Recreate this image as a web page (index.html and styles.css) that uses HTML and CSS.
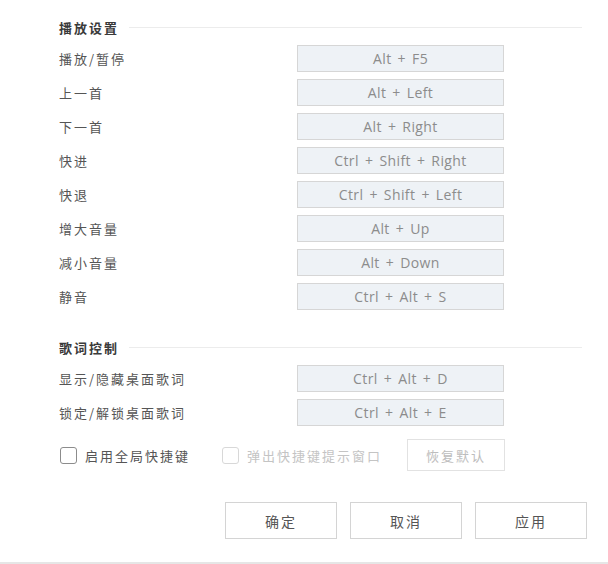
FILE: index.html
```html
<!DOCTYPE html>
<html lang="zh-CN">
<head>
<meta charset="utf-8">
<link rel="stylesheet" href="styles.css">
</head>
<body>
<div class="page">
  <div class="section-title"><span>播放设置</span><i class="rule"></i></div>
  <div class="rows">
    <div class="row"><span class="label">播放/暂停</span><span class="key">Alt + F5</span></div>
    <div class="row"><span class="label">上一首</span><span class="key">Alt + Left</span></div>
    <div class="row"><span class="label">下一首</span><span class="key">Alt + Right</span></div>
    <div class="row"><span class="label">快进</span><span class="key">Ctrl + Shift + Right</span></div>
    <div class="row"><span class="label">快退</span><span class="key">Ctrl + Shift + Left</span></div>
    <div class="row"><span class="label">增大音量</span><span class="key">Alt + Up</span></div>
    <div class="row"><span class="label">减小音量</span><span class="key">Alt + Down</span></div>
    <div class="row"><span class="label">静音</span><span class="key">Ctrl + Alt + S</span></div>
  </div>
  <div class="section-title second"><span>歌词控制</span><i class="rule"></i></div>
  <div class="rows">
    <div class="row"><span class="label">显示/隐藏桌面歌词</span><span class="key">Ctrl + Alt + D</span></div>
    <div class="row"><span class="label">锁定/解锁桌面歌词</span><span class="key">Ctrl + Alt + E</span></div>
  </div>
  <div class="options">
    <label class="check"><span class="box"></span>启用全局快捷键</label>
    <label class="check disabled"><span class="box"></span>弹出快捷键提示窗口</label>
    <button class="reset">恢复默认</button>
  </div>
  <div class="actions">
    <button class="btn">确定</button>
    <button class="btn">取消</button>
    <button class="btn">应用</button>
  </div>
</div>
<div class="bottom-line"></div>
</body>
</html>
```
FILE: styles.css
```css
html, body {
  margin: 0;
  padding: 0;
  background: #ffffff;
}
body {
  width: 608px;
  height: 564px;
  position: relative;
  overflow: hidden;
  font-family: "Noto Sans CJK SC", "Open Sans", sans-serif;
  font-size: 13px;
  color: #555;
}
.page {
  padding: 17px 26px 0 59px;
}
.section-title {
  display: flex;
  align-items: center;
  height: 20px;
  margin-bottom: 8px;
  font-weight: bold;
  color: #3a3a3a;
  letter-spacing: 2px;
}
.section-title.second {
  margin-top: 27px;
}
.rule {
  flex: 1;
  height: 1px;
  background: #ececec;
  margin-left: 10px;
}
.rows {
  display: flex;
  flex-direction: column;
  gap: 7px;
}
.row {
  display: flex;
  align-items: center;
  height: 27px;
}
.label {
  width: 238px;
  letter-spacing: 2px;
  color: #555;
}
.key {
  box-sizing: border-box;
  width: 207px;
  height: 27px;
  border: 1px solid #d6d6d6;
  background: #eef2f6;
  display: flex;
  align-items: center;
  justify-content: center;
  font-family: "Open Sans", "Noto Sans", sans-serif;
  font-size: 14px;
  letter-spacing: 0.4px;
  word-spacing: 2px;
  color: #8c8c8c;
}
.options {
  display: flex;
  align-items: center;
  margin-top: 13px;
  height: 32px;
}
.check {
  display: flex;
  align-items: center;
  letter-spacing: 2px;
  color: #555;
}
.check + .check {
  margin-left: 31px;
}
.box {
  box-sizing: border-box;
  width: 17px;
  height: 17px;
  border: 1px solid #8c8c8c;
  border-radius: 3px;
  margin-right: 8px;
  margin-left: 1px;
  background: #fff;
}
.check.disabled {
  color: #c4c4c4;
}
.check.disabled .box {
  border-color: #d8d8d8;
}
.reset {
  margin-left: 25px;
  box-sizing: border-box;
  width: 98px;
  height: 32px;
  border: 1px solid #e2e2e2;
  background: #fff;
  font-family: inherit;
  font-size: 13px;
  letter-spacing: 2px;
  color: #bdbdbd;
  padding: 0;
}
.actions {
  display: flex;
  justify-content: flex-end;
  gap: 13px;
  margin-top: 31px;
  margin-right: -5px;
}
.btn {
  box-sizing: border-box;
  width: 112px;
  height: 37px;
  border: 1px solid #d4d4d4;
  background: #fff;
  font-family: inherit;
  font-size: 14px;
  letter-spacing: 2px;
  color: #555;
  padding: 0;
}
.bottom-line {
  position: absolute;
  left: 0;
  right: 0;
  bottom: 0;
  height: 2px;
  background: #e6e6e6;
}
```
